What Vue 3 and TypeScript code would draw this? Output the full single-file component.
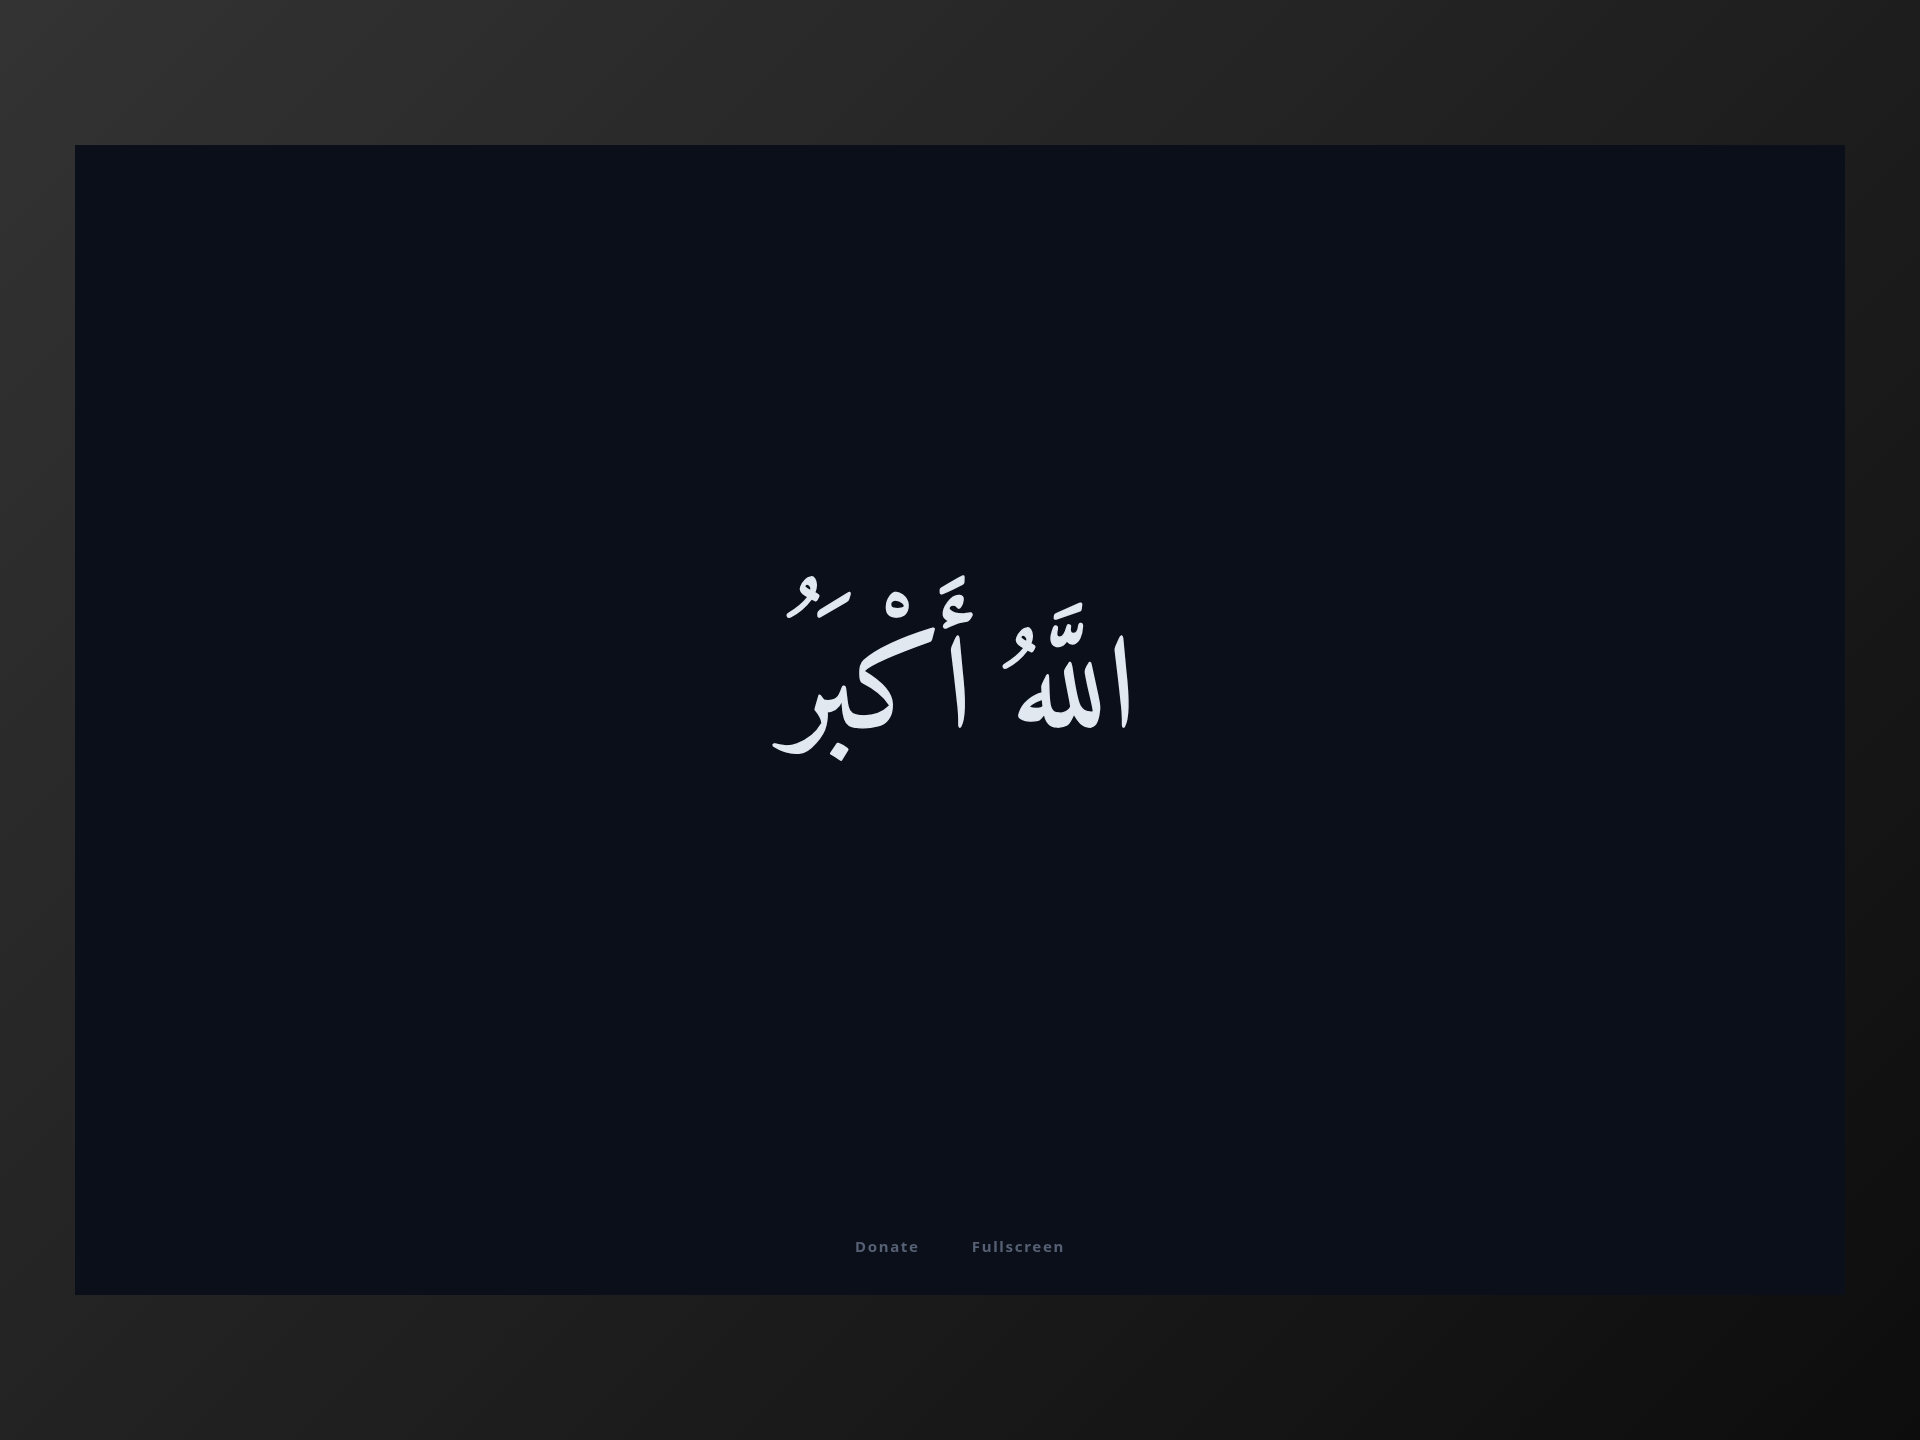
<script setup lang="ts">
const links: string[] = ['Donate', 'Fullscreen']
</script>

<template>
  <div class="page">
    <main class="panel">
      <div class="center">
        <h1 class="takbir" dir="rtl" lang="ar">اللَّهُ أَكْبَرُ</h1>
      </div>
      <nav class="footer">
        <a v-for="l in links" :key="l" class="link">{{ l }}</a>
      </nav>
    </main>
  </div>
</template>

<style>
body { margin: 0; background: #1a1a1a; }
</style>

<style scoped>
.page {
  box-sizing: border-box;
  width: 1920px;
  height: 1440px;
  padding: 145px 75px;
  background: linear-gradient(135deg, #333333 0%, #0d0d0d 100%);
}
.panel {
  box-sizing: border-box;
  height: 100%;
  display: flex;
  flex-direction: column;
  background: #0b0f19;
}
.center {
  flex: 1;
  display: flex;
  align-items: center;
  justify-content: center;
  padding-top: 10px;
}
.takbir {
  margin: 0;
  font-family: "Amiri", serif;
  font-size: 131px;
  font-weight: 400;
  line-height: 1.2;
  color: #e2e8f0;
  -webkit-text-stroke: 1.4px #e2e8f0;
  filter: blur(0.5px);
}
.footer {
  display: flex;
  justify-content: center;
  gap: 52px;
  padding-bottom: 39px;
}
.link {
  font-family: "Noto Sans", sans-serif;
  font-size: 15px;
  font-weight: 700;
  letter-spacing: 1.7px;
  line-height: 20px;
  color: #566074;
  filter: blur(0.4px);
}
</style>
